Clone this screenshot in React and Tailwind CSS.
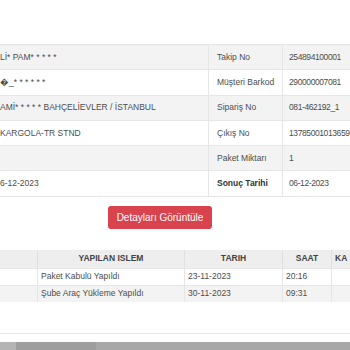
const info = [
  { left: "Lİ* PAM* * * * *", label: "Takip No", value: "254894100001" },
  { left: "\uFFFD_* * * * * *", label: "Müşteri Barkod", value: "290000007081" },
  { left: "AMİ* * * * * BAHÇELİEVLER / İSTANBUL", label: "Sipariş No", value: "081-462192_1" },
  { left: "KARGOLA-TR STND", label: "Çıkış No", value: "13785001013659" },
  { left: "", label: "Paket Miktarı", value: "1" },
  { left: "6-12-2023", label: "Sonuç Tarihi", value: "06-12-2023", bold: true },
];

const moves = [
  { islem: "Paket Kabulü Yapıldı", tarih: "23-11-2023", saat: "20:16" },
  { islem: "Şube Araç Yükleme Yapıldı", tarih: "30-11-2023", saat: "09:31" },
];

const InfoRow = ({ row, striped }) => (
  <div
    className={`grid grid-cols-[208px_74px_1fr] h-[25.3px] border-t border-[#e6e6e6] ${
      striped ? "bg-[#f3f3f3]" : "bg-white"
    }`}
  >
    <div className="flex items-center whitespace-nowrap overflow-hidden">{row.left}</div>
    <div
      className={`flex items-center pl-2 border-l border-[#e6e6e6] whitespace-nowrap ${
        row.bold ? "font-bold text-[#333]" : ""
      }`}
    >
      {row.label}
    </div>
    <div className="flex items-center pl-[6px] border-l border-[#e6e6e6] whitespace-nowrap overflow-hidden tracking-[-0.4px]">
      {row.value}
    </div>
  </div>
);

const MoveRow = ({ m, striped }) => (
  <div
    className={`grid grid-cols-[37px_147px_98px_49px_1fr] h-[17px] border-t border-[#e6e6e6] ${
      striped ? "bg-[#f3f3f3]" : "bg-white"
    }`}
  >
    <div />
    <div className="flex items-center pl-[3px] border-l border-[#e6e6e6] whitespace-nowrap">{m.islem}</div>
    <div className="flex items-center pl-[3px] border-l border-[#e6e6e6]">{m.tarih}</div>
    <div className="flex items-center pl-[3px] border-l border-[#e6e6e6]">{m.saat}</div>
    <div className="border-l border-[#e6e6e6]" />
  </div>
);

export default function App() {
  return (
    <div className="w-[350px] h-[350px] overflow-hidden bg-white text-[#4d4d4d] text-[8.5px] font-['Liberation_Sans',Arial,sans-serif] flex flex-col">
      <div className="h-[44px]" />
      <div className="border-b border-[#e6e6e6]">
        {info.map((row, i) => (
          <InfoRow key={row.label} row={row} striped={i % 2 === 0} />
        ))}
      </div>
      <div className="flex pt-[9px] pl-[108px]">
        <button className="w-[104px] h-[23px] rounded-[3px] bg-[#d9434e] text-white text-[10px]">
          Detayları Görüntüle
        </button>
      </div>
      <div className="mt-[21px]">
        <div className="grid grid-cols-[37px_147px_98px_49px_1fr] h-[18px] bg-[#eeeeee] text-[8.5px] font-bold text-[#444]">
          <div />
          <div className="flex items-center justify-center border-l border-[#e0e0e0]">YAPILAN ISLEM</div>
          <div className="flex items-center justify-center border-l border-[#e0e0e0]">TARIH</div>
          <div className="flex items-center justify-center border-l border-[#e0e0e0]">SAAT</div>
          <div className="flex items-center pl-[3px] border-l border-[#e0e0e0]">KA</div>
        </div>
        {moves.map((m, i) => (
          <MoveRow key={m.tarih} m={m} striped={i % 2 === 1} />
        ))}
      </div>
      <div className="flex-1 border-b border-[#e6e6e6] mb-[8px]" />
      <div className="h-[8px] bg-[#a8a8a8] flex">
        <div className="w-[16px] bg-[#b4b4b4]" />
        <div className="w-[80px] bg-[#9e9e9e]" />
        <div className="flex-1" />
      </div>
    </div>
  );
}
